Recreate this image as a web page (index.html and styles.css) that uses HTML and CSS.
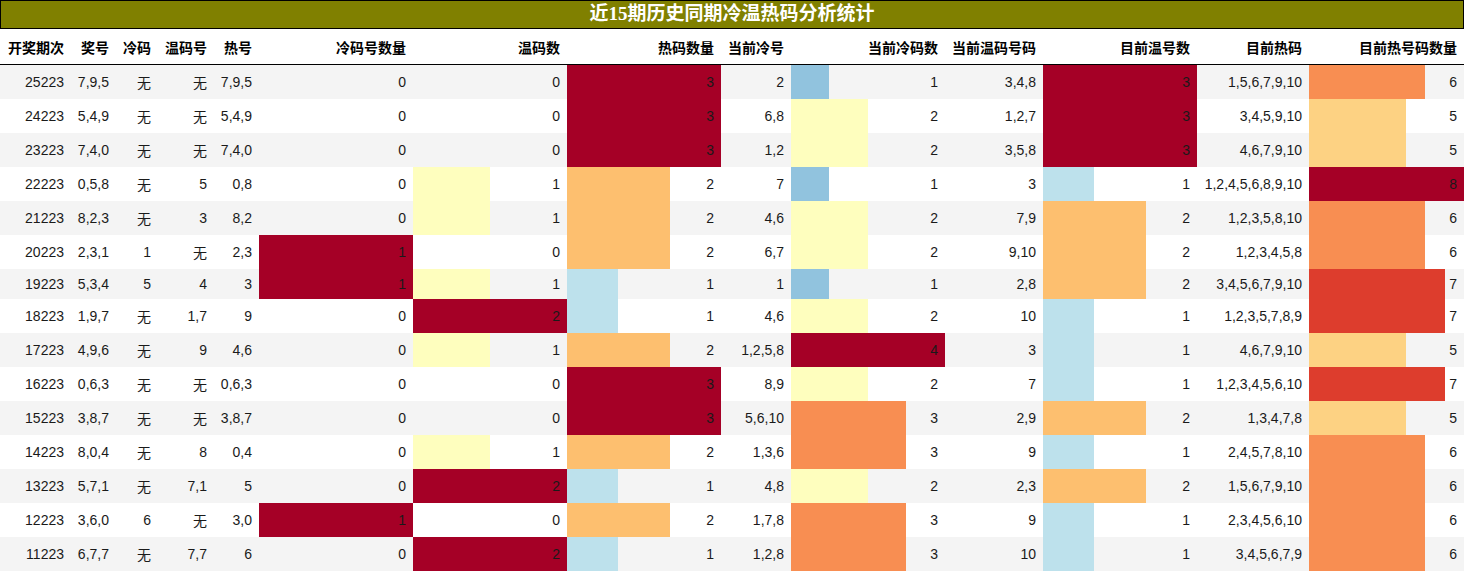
FILE: index.html
```html
<!DOCTYPE html>
<html lang="zh">
<head>
<meta charset="utf-8">
<title>近15期历史同期冷温热码分析统计</title>
<link rel="stylesheet" href="styles.css">
</head>
<body>
<div class="title">近15期历史同期冷温热码分析统计</div>
<table class="stats">
  <colgroup>
    <col class="w71"><col class="w45"><col class="w42"><col class="w56"><col class="w45">
    <col class="w154"><col class="w154"><col class="w154"><col class="w70"><col class="w154">
    <col class="w98"><col class="w154"><col class="w112"><col class="w155">
  </colgroup>
  <thead>
    <tr>
      <th>开奖期次</th><th>奖号</th><th>冷码</th><th>温码号</th><th>热号</th><th>冷码号数量</th><th>温码数</th><th>热码数量</th><th>当前冷号</th><th>当前冷码数</th><th>当前温码号码</th><th>目前温号数</th><th>目前热码</th><th>目前热号码数量</th>
    </tr>
  </thead>
  <tbody>
    <tr>
      <td>25223</td><td>7,9,5</td><td>无</td><td>无</td><td>7,9,5</td><td>0</td><td>0</td>
      <td class="bar red" style="--w:100%">3</td><td>2</td><td class="bar blue" style="--w:25%">1</td><td>3,4,8</td>
      <td class="bar red" style="--w:100%">3</td><td>1,5,6,7,9,10</td><td class="bar orange" style="--w:75%">6</td>
    </tr>
    <tr>
      <td>24223</td><td>5,4,9</td><td>无</td><td>无</td><td>5,4,9</td><td>0</td><td>0</td>
      <td class="bar red" style="--w:100%">3</td><td>6,8</td><td class="bar yellow" style="--w:50%">2</td><td>1,2,7</td>
      <td class="bar red" style="--w:100%">3</td><td>3,4,5,9,10</td><td class="bar sand" style="--w:62.5%">5</td>
    </tr>
    <tr>
      <td>23223</td><td>7,4,0</td><td>无</td><td>无</td><td>7,4,0</td><td>0</td><td>0</td>
      <td class="bar red" style="--w:100%">3</td><td>1,2</td><td class="bar yellow" style="--w:50%">2</td><td>3,5,8</td>
      <td class="bar red" style="--w:100%">3</td><td>4,6,7,9,10</td><td class="bar sand" style="--w:62.5%">5</td>
    </tr>
    <tr>
      <td>22223</td><td>0,5,8</td><td>无</td><td>5</td><td>0,8</td><td>0</td><td class="bar yellow" style="--w:50%">1</td>
      <td class="bar peach" style="--w:66.67%">2</td><td>7</td><td class="bar blue" style="--w:25%">1</td><td>3</td>
      <td class="bar sky" style="--w:33.33%">1</td><td>1,2,4,5,6,8,9,10</td><td class="bar red" style="--w:100%">8</td>
    </tr>
    <tr>
      <td>21223</td><td>8,2,3</td><td>无</td><td>3</td><td>8,2</td><td>0</td><td class="bar yellow" style="--w:50%">1</td>
      <td class="bar peach" style="--w:66.67%">2</td><td>4,6</td><td class="bar yellow" style="--w:50%">2</td><td>7,9</td>
      <td class="bar peach" style="--w:66.67%">2</td><td>1,2,3,5,8,10</td><td class="bar orange" style="--w:75%">6</td>
    </tr>
    <tr>
      <td>20223</td><td>2,3,1</td><td>1</td><td>无</td><td>2,3</td><td class="bar red" style="--w:100%">1</td><td>0</td>
      <td class="bar peach" style="--w:66.67%">2</td><td>6,7</td><td class="bar yellow" style="--w:50%">2</td><td>9,10</td>
      <td class="bar peach" style="--w:66.67%">2</td><td>1,2,3,4,5,8</td><td class="bar orange" style="--w:75%">6</td>
    </tr>
    <tr>
      <td>19223</td><td>5,3,4</td><td>5</td><td>4</td><td>3</td><td class="bar red" style="--w:100%">1</td><td class="bar yellow" style="--w:50%">1</td>
      <td class="bar sky" style="--w:33.33%">1</td><td>1</td><td class="bar blue" style="--w:25%">1</td><td>2,8</td>
      <td class="bar peach" style="--w:66.67%">2</td><td>3,4,5,6,7,9,10</td><td class="bar scarlet" style="--w:87.5%">7</td>
    </tr>
    <tr>
      <td>18223</td><td>1,9,7</td><td>无</td><td>1,7</td><td>9</td><td>0</td><td class="bar red" style="--w:100%">2</td>
      <td class="bar sky" style="--w:33.33%">1</td><td>4,6</td><td class="bar yellow" style="--w:50%">2</td><td>10</td>
      <td class="bar sky" style="--w:33.33%">1</td><td>1,2,3,5,7,8,9</td><td class="bar scarlet" style="--w:87.5%">7</td>
    </tr>
    <tr>
      <td>17223</td><td>4,9,6</td><td>无</td><td>9</td><td>4,6</td><td>0</td><td class="bar yellow" style="--w:50%">1</td>
      <td class="bar peach" style="--w:66.67%">2</td><td>1,2,5,8</td><td class="bar red" style="--w:100%">4</td><td>3</td>
      <td class="bar sky" style="--w:33.33%">1</td><td>4,6,7,9,10</td><td class="bar sand" style="--w:62.5%">5</td>
    </tr>
    <tr>
      <td>16223</td><td>0,6,3</td><td>无</td><td>无</td><td>0,6,3</td><td>0</td><td>0</td>
      <td class="bar red" style="--w:100%">3</td><td>8,9</td><td class="bar yellow" style="--w:50%">2</td><td>7</td>
      <td class="bar sky" style="--w:33.33%">1</td><td>1,2,3,4,5,6,10</td><td class="bar scarlet" style="--w:87.5%">7</td>
    </tr>
    <tr>
      <td>15223</td><td>3,8,7</td><td>无</td><td>无</td><td>3,8,7</td><td>0</td><td>0</td>
      <td class="bar red" style="--w:100%">3</td><td>5,6,10</td><td class="bar orange" style="--w:75%">3</td><td>2,9</td>
      <td class="bar peach" style="--w:66.67%">2</td><td>1,3,4,7,8</td><td class="bar sand" style="--w:62.5%">5</td>
    </tr>
    <tr>
      <td>14223</td><td>8,0,4</td><td>无</td><td>8</td><td>0,4</td><td>0</td><td class="bar yellow" style="--w:50%">1</td>
      <td class="bar peach" style="--w:66.67%">2</td><td>1,3,6</td><td class="bar orange" style="--w:75%">3</td><td>9</td>
      <td class="bar sky" style="--w:33.33%">1</td><td>2,4,5,7,8,10</td><td class="bar orange" style="--w:75%">6</td>
    </tr>
    <tr>
      <td>13223</td><td>5,7,1</td><td>无</td><td>7,1</td><td>5</td><td>0</td><td class="bar red" style="--w:100%">2</td>
      <td class="bar sky" style="--w:33.33%">1</td><td>4,8</td><td class="bar yellow" style="--w:50%">2</td><td>2,3</td>
      <td class="bar peach" style="--w:66.67%">2</td><td>1,5,6,7,9,10</td><td class="bar orange" style="--w:75%">6</td>
    </tr>
    <tr>
      <td>12223</td><td>3,6,0</td><td>6</td><td>无</td><td>3,0</td><td class="bar red" style="--w:100%">1</td><td>0</td>
      <td class="bar peach" style="--w:66.67%">2</td><td>1,7,8</td><td class="bar orange" style="--w:75%">3</td><td>9</td>
      <td class="bar sky" style="--w:33.33%">1</td><td>2,3,4,5,6,10</td><td class="bar orange" style="--w:75%">6</td>
    </tr>
    <tr>
      <td>11223</td><td>6,7,7</td><td>无</td><td>7,7</td><td>6</td><td>0</td><td class="bar red" style="--w:100%">2</td>
      <td class="bar sky" style="--w:33.33%">1</td><td>1,2,8</td><td class="bar orange" style="--w:75%">3</td><td>10</td>
      <td class="bar sky" style="--w:33.33%">1</td><td>3,4,5,6,7,9</td><td class="bar orange" style="--w:75%">6</td>
    </tr>
  </tbody>
</table>
</body>
</html>
```
FILE: styles.css
```css
html, body {
  margin: 0;
  padding: 0;
  background: #ffffff;
}

.title {
  width: 1464px;
  box-sizing: border-box;
  height: 29px;
  line-height: 26px;
  border: 1px solid #000;
  background: #808000;
  color: #ffffff;
  text-align: center;
  font-family: "Liberation Serif", "Noto Sans CJK SC", serif;
  font-weight: bold;
  font-size: 19px;
}

.stats {
  width: 1464px;
  table-layout: fixed;
  border-collapse: collapse;
  border-spacing: 0;
  font-family: "Liberation Sans", "Noto Sans CJK SC", sans-serif;
  font-size: 14px;
  color: #1a1a1a;
}

.w42 { width: 42px; }
.w45 { width: 45px; }
.w56 { width: 56px; }
.w70 { width: 70px; }
.w71 { width: 71px; }
.w98 { width: 98px; }
.w112 { width: 112px; }
.w154 { width: 154px; }
.w155 { width: 155px; }

.stats th,
.stats td {
  padding: 7px 7px 7px 4px;
  text-align: right;
  white-space: nowrap;
  overflow: hidden;
}

.stats th {
  padding-top: 8px;
  font-weight: bold;
  color: #000;
  background: #fff;
  border-bottom: 1px solid #000;
}

.stats tbody tr:nth-child(odd) {
  background: #f4f4f4;
}

.stats tbody tr:nth-child(even) {
  background: #ffffff;
}

.bar {
  background-image: linear-gradient(90deg, var(--c) var(--w), transparent var(--w));
  background-repeat: no-repeat;
}

.red { --c: #a50026; }
.scarlet { --c: #dd3d2d; }
.orange { --c: #f88e52; }
.peach { --c: #fdbf6f; }
.sand { --c: #fdd283; }
.yellow { --c: #fefebe; }
.sky { --c: #bde1ec; }
.blue { --c: #91c3de; }
```
